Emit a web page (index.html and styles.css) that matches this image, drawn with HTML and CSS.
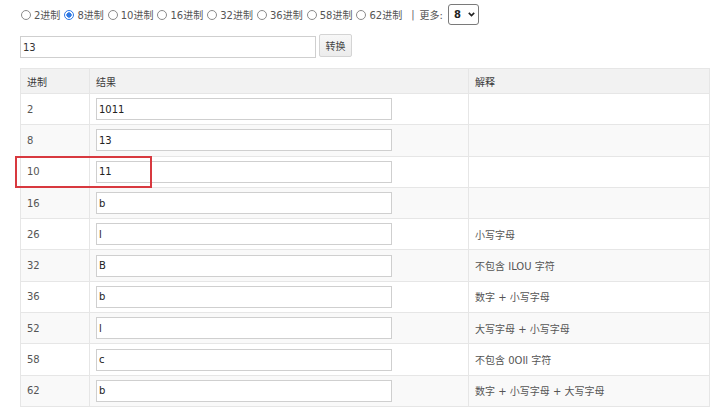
FILE: index.html
```html
<!DOCTYPE html>
<html lang="zh">
<head>
<meta charset="utf-8">
<title>进制转换</title>
<link rel="stylesheet" href="styles.css">
</head>
<body>
<div class="page">
  <div class="bases">
    <label class="opt"><input type="radio" name="base"><span>2进制</span></label>
    <label class="opt"><input type="radio" name="base" checked><span>8进制</span></label>
    <label class="opt"><input type="radio" name="base"><span>10进制</span></label>
    <label class="opt"><input type="radio" name="base"><span>16进制</span></label>
    <label class="opt"><input type="radio" name="base"><span>32进制</span></label>
    <label class="opt"><input type="radio" name="base"><span>36进制</span></label>
    <label class="opt"><input type="radio" name="base"><span>58进制</span></label>
    <label class="opt"><input type="radio" name="base"><span>62进制</span></label>
    <span class="sep">|</span>
    <span class="more">更多:</span>
    <span class="sel">
      <select><option>8</option></select>
      <svg class="chev" width="7" height="5" viewBox="0 0 7 5"><path d="M0.8 0.9 L3.5 3.6 L6.2 0.9" fill="none" stroke="#222" stroke-width="1.6"/></svg>
    </span>
  </div>
  <div class="form">
    <input class="num" type="text" value="13">
    <button class="go">转换</button>
  </div>
  <div class="tablewrap">
    <table class="result">
      <colgroup><col class="c1"><col class="c2"><col class="c3"></colgroup>
      <thead>
        <tr><th>进制</th><th>结果</th><th>解释</th></tr>
      </thead>
      <tbody>
        <tr><td>2</td><td><input class="out" value="1011"></td><td></td></tr>
        <tr><td>8</td><td><input class="out" value="13"></td><td></td></tr>
        <tr><td>10</td><td><input class="out" value="11"></td><td></td></tr>
        <tr><td>16</td><td><input class="out" value="b"></td><td></td></tr>
        <tr><td>26</td><td><input class="out" value="l"></td><td>小写字母</td></tr>
        <tr><td>32</td><td><input class="out" value="B"></td><td>不包含 ILOU 字符</td></tr>
        <tr><td>36</td><td><input class="out" value="b"></td><td>数字 + 小写字母</td></tr>
        <tr><td>52</td><td><input class="out" value="l"></td><td>大写字母 + 小写字母</td></tr>
        <tr><td>58</td><td><input class="out" value="c"></td><td>不包含 0OIl 字符</td></tr>
        <tr><td>62</td><td><input class="out" value="b"></td><td>数字 + 小写字母 + 大写字母</td></tr>
      </tbody>
    </table>
    <div class="mark"></div>
  </div>
</div>
</body>
</html>
```

FILE: styles.css
```css
* { box-sizing: border-box; }
html, body { margin: 0; padding: 0; background: #fff; }
body {
  font-family: "DejaVu Sans", "Noto Sans CJK SC", sans-serif;
  font-size: 10px;
  color: #555;
  overflow: hidden;
}
.page { padding: 4px 11px 0 20px; }

.bases {
  display: flex;
  align-items: center;
  height: 21px;
  padding-left: 1px;
}
.opt {
  display: flex;
  align-items: center;
  margin-right: 4px;
  color: #555;
}
.opt input {
  -webkit-appearance: none;
  appearance: none;
  width: 10px;
  height: 10px;
  margin: 0 3px 0 0;
  border: 1px solid #8a8a8a;
  border-radius: 50%;
  background: #fff;
}
.opt input:checked {
  border-color: #2f7ae5;
  background: radial-gradient(circle, #2f7ae5 0 2.4px, #fff 2.9px);
}
.sep { margin: 0 5px 0 5px; color: #666; }
.more { color: #555; margin-right: 5px; }
.sel { position: relative; display: inline-block; }
.sel select {
  -webkit-appearance: none;
  appearance: none;
  width: 31px;
  height: 21px;
  border: 1px solid #7a7a7a;
  border-radius: 3px;
  background: #fff;
  font-family: "DejaVu Sans", sans-serif;
  font-size: 10px;
  font-weight: bold;
  color: #222;
  padding: 0 0 0 5px;
}
.chev { position: absolute; left: 20px; top: 8px; }

.form {
  display: flex;
  align-items: flex-start;
  margin-top: 9px;
}
.num {
  width: 296px;
  height: 22px;
  margin-top: 2px;
  border: 1px solid #cfcfcf;
  padding: 0 2px;
  font-family: "DejaVu Sans", sans-serif;
  font-size: 10px;
  color: #333;
  outline: none;
}
.go {
  width: 33px;
  height: 23px;
  margin-left: 3px;
  border: 1px solid #d4d4d4;
  border-radius: 2px;
  background: linear-gradient(#f7f7f7, #ececec);
  font-family: "Noto Sans CJK SC", sans-serif;
  font-size: 10px;
  color: #444;
  padding: 0;
}

.tablewrap { position: relative; margin-top: 10px; }
.result {
  width: 689px;
  border-collapse: collapse;
  table-layout: fixed;
  border: 1px solid #e6e6e6;
}
.c1 { width: 69px; }
.c2 { width: 379px; }
.c3 { width: 241px; }
.result th, .result td {
  border: 1px solid #e6e6e6;
  text-align: left;
  font-weight: normal;
  vertical-align: middle;
  padding: 0 6px;
}
.result th {
  height: 25px;
  background: #f2f2f2;
  color: #3a3a3a;
}
.result td { height: 31.3px; color: #555; }
.result tbody tr:nth-child(even) td { background: #f9f9f9; }
.out {
  display: block;
  width: 296px;
  height: 22px;
  border: 1px solid #cfcfcf;
  padding: 0 2px;
  background: #fff;
  font-family: "DejaVu Sans", sans-serif;
  font-size: 10px;
  color: #222;
  outline: none;
}
.mark {
  position: absolute;
  left: -5px;
  top: 88px;
  width: 137px;
  height: 32px;
  border: 2px solid #d8393f;
}
```
